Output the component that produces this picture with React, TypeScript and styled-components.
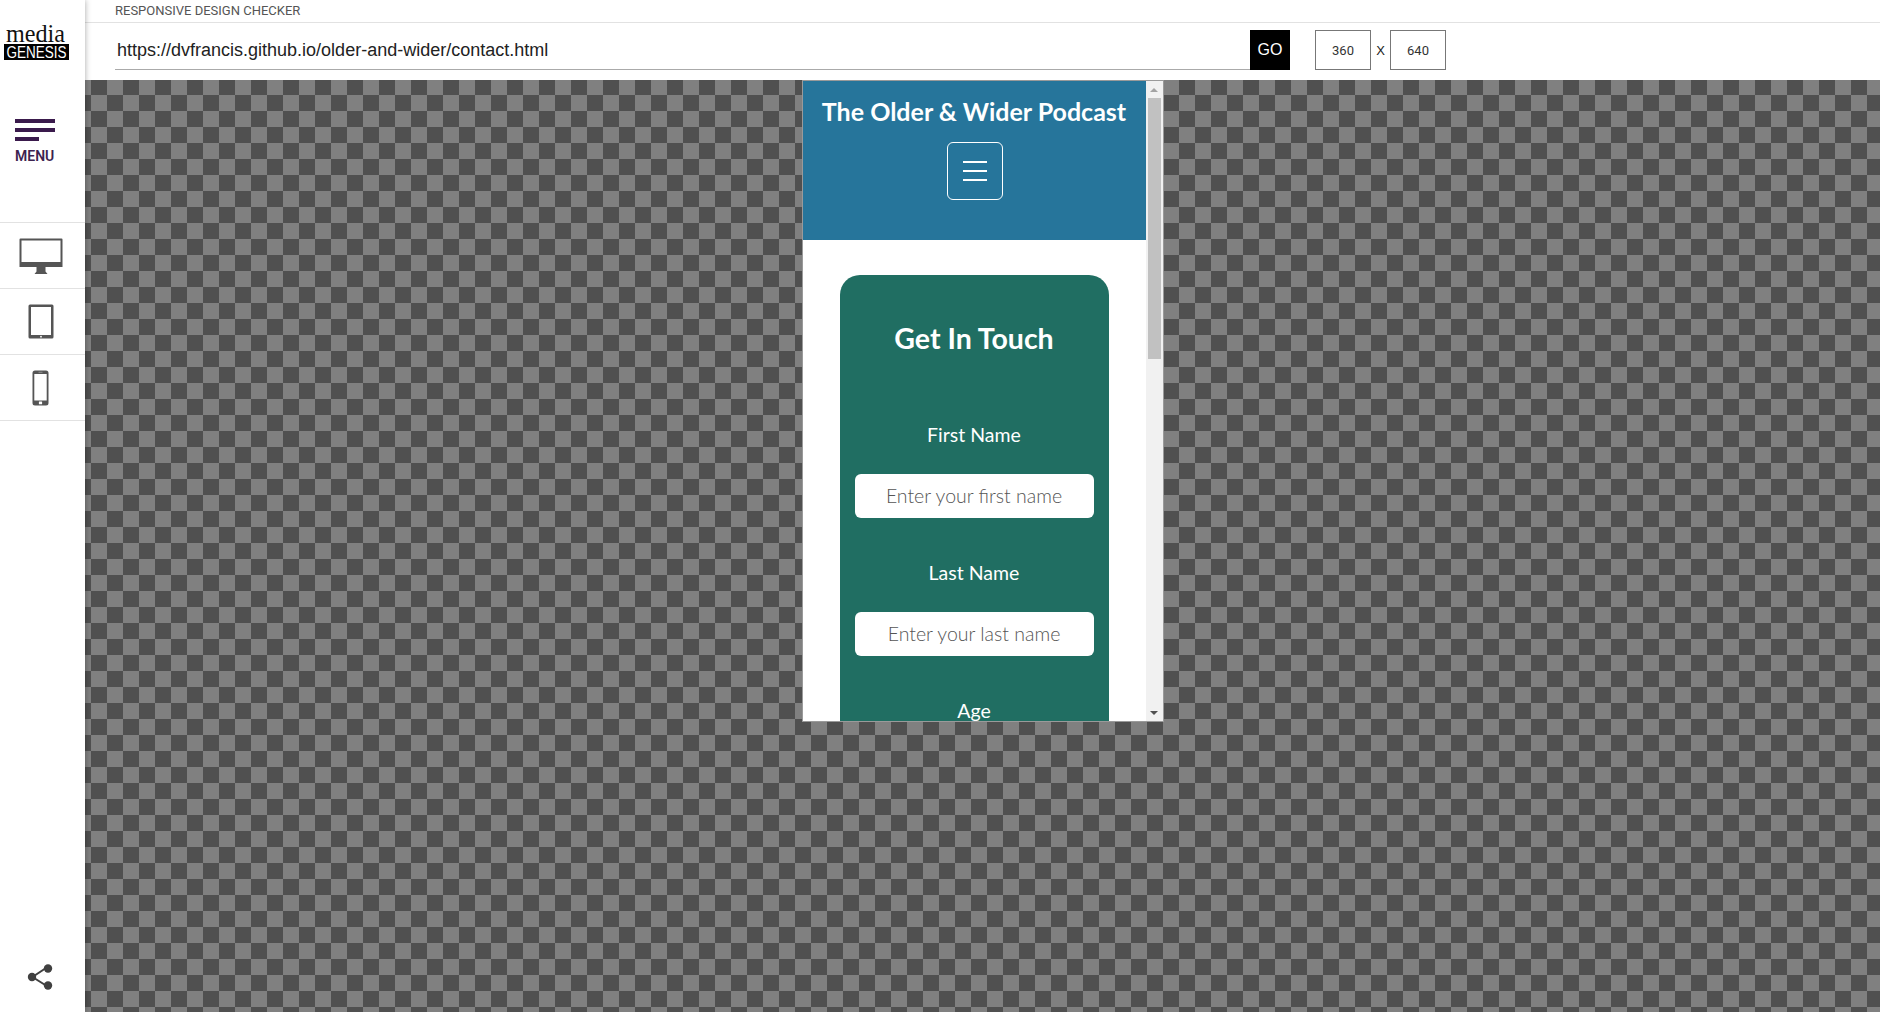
import React from "react";
import styled, { createGlobalStyle } from "styled-components";

const GlobalStyle = createGlobalStyle`
  html, body {
    margin: 0;
    height: 100%;
    overflow: hidden;
    background: #ffffff;
  }
  #root {
    height: 100%;
  }
  * {
    box-sizing: border-box;
  }
`;

function Logo() {
  return (
    <LogoSvg viewBox="0 0 85 48" width="85" height="48">
      <text x="35.5" y="25.7" textAnchor="middle" fontFamily="'Liberation Serif', serif" fontSize="26" textLength="59" lengthAdjust="spacingAndGlyphs" fill="#111">media</text>
      <rect x="4" y="28" width="65" height="16" fill="#000" />
      <text x="36.5" y="41.8" textAnchor="middle" fontFamily="'Liberation Sans', sans-serif" fontSize="16" textLength="60" lengthAdjust="spacingAndGlyphs" fill="#fff">GENESIS</text>
    </LogoSvg>
  );
}

function DesktopIcon() {
  return (
    <svg width="44" height="37" viewBox="0 0 44 37">
      <path fill="#555" fillRule="evenodd" d="M1.5 0.5h41a1 1 0 0 1 1 1v27.5h-43v-27.5a1 1 0 0 1 1-1zM2.500 2.500v21.500h39v-21.500z" />
      <path fill="#555" d="M17.500 29h9v4.500l2 2.500h-13l2-2.500z" />
    </svg>
  );
}

function TabletIcon() {
  return (
    <svg width="26" height="35" viewBox="0 0 26 35">
      <path fill="#555" fillRule="evenodd" d="M2 0.500h22a1.500 1.500 0 0 1 1.500 1.500v31a1.500 1.500 0 0 1-1.500 1.500h-22a1.500 1.500 0 0 1-1.500-1.500v-31a1.500 1.500 0 0 1 1.500-1.500zM3 3v28h20v-28z" />
      <circle cx="13" cy="32.700" r="0.900" fill="#fff" />
    </svg>
  );
}

function PhoneIcon() {
  return (
    <svg width="17" height="36" viewBox="0 0 17 36">
      <path fill="#555" fillRule="evenodd" d="M3 0.500h11a2.500 2.500 0 0 1 2.500 2.500v30a2.500 2.500 0 0 1-2.500 2.500h-11a2.500 2.500 0 0 1-2.500-2.500v-30a2.500 2.500 0 0 1 2.500-2.500zM2.300 4v26.500h12.400v-26.500z" />
      <rect x="6.500" y="1.800" width="4" height="0.900" fill="#999" />
      <rect x="6.900" y="31.600" width="3.200" height="2.600" rx="0.500" fill="#fff" />
    </svg>
  );
}

function ShareIcon() {
  return (
    <svg width="26" height="26" viewBox="0 0 26 26">
      <path d="M19 4 L5.500 13 L19 21.500" fill="none" stroke="#404040" strokeWidth="2" />
      <circle cx="5" cy="13" r="4.200" fill="#404040" />
      <circle cx="21" cy="4.500" r="4.200" fill="#404040" />
      <circle cx="21" cy="21.500" r="4.200" fill="#404040" />
    </svg>
  );
}

export default function App() {
  return (
    <>
      <GlobalStyle />
      <Page>
        <Sidebar>
          <LogoBox>
            <Logo />
          </LogoBox>
          <MenuButton>
            <MenuBar />
            <MenuBar />
            <MenuBar $short />
            <MenuLabel>MENU</MenuLabel>
          </MenuButton>
          <DeviceList>
            <DeviceRow $shift={3} $drop={1}><DesktopIcon /></DeviceRow>
            <DeviceRow $shift={3}><TabletIcon /></DeviceRow>
            <DeviceRow $shift={5}><PhoneIcon /></DeviceRow>
          </DeviceList>
          <ShareBox>
            <ShareIcon />
          </ShareBox>
        </Sidebar>

        <Main>
          <TitleRow>RESPONSIVE DESIGN CHECKER</TitleRow>
          <AddressRow>
            <UrlInput readOnly value="https://dvfrancis.github.io/older-and-wider/contact.html" />
            <GoButton>GO</GoButton>
            <SizeGroup>
              <SizeInput readOnly value="360" />
              <SizeSep>X</SizeSep>
              <SizeInput readOnly value="640" />
            </SizeGroup>
          </AddressRow>

          <Stage>
            <Frame>
              <Viewport>
                <SiteHeader>
                  <SiteTitle>The Older &amp; Wider Podcast</SiteTitle>
                  <Toggler>
                    <TogglerLine />
                    <TogglerLine />
                    <TogglerLine />
                  </Toggler>
                </SiteHeader>
                <SiteBody>
                  <Card>
                    <CardTitle>Get In Touch</CardTitle>
                    <Field>
                      <FieldLabel>First Name</FieldLabel>
                      <FieldInput placeholder="Enter your first name" />
                    </Field>
                    <Field>
                      <FieldLabel>Last Name</FieldLabel>
                      <FieldInput placeholder="Enter your last name" />
                    </Field>
                    <Field>
                      <FieldLabel>Age</FieldLabel>
                    </Field>
                  </Card>
                </SiteBody>
              </Viewport>
              <Scrollbar>
                <ArrowBox>
                  <ArrowUp />
                </ArrowBox>
                <Thumb />
                <ArrowBox>
                  <ArrowDown />
                </ArrowBox>
              </Scrollbar>
            </Frame>
          </Stage>
        </Main>
      </Page>
    </>
  );
}

const Page = styled.div`
  display: flex;
  width: 100%;
  height: 100vh;
`;

const Sidebar = styled.aside`
  flex: 0 0 85px;
  display: flex;
  flex-direction: column;
  background: #ffffff;
  box-shadow: 0 0 6px rgba(0, 0, 0, 0.35);
  position: relative;
  z-index: 2;
`;

const LogoBox = styled.div`
  height: 108px;
  padding-top: 16px;
`;

const LogoSvg = styled.svg`
  display: block;
`;

const MenuButton = styled.div`
  height: 114px;
  padding: 11px 0 0 15px;
  display: flex;
  flex-direction: column;
`;

const MenuBar = styled.div<{ $short?: boolean }>`
  width: ${(props) => (props.$short ? "24px" : "40px")};
  height: 4px;
  margin-bottom: 5px;
  background: #3a1a4c;
`;

const MenuLabel = styled.div`
  font-family: Roboto, sans-serif;
  font-size: 14px;
  font-weight: 600;
  line-height: 20px;
  color: #3d2350;
`;

const DeviceList = styled.div`
  display: flex;
  flex-direction: column;
  border-top: 1px solid #e2e2e2;
`;

const DeviceRow = styled.div<{ $shift: number; $drop?: number }>`
  height: 66px;
  display: flex;
  align-items: center;
  justify-content: center;
  padding-right: ${(props) => props.$shift}px;
  padding-top: ${(props) => (props.$drop || 0) * 2}px;
  border-bottom: 1px solid #e2e2e2;

  svg {
    display: block;
  }
`;

const ShareBox = styled.div`
  margin-top: auto;
  height: 70px;
  padding: 22px 0 0 27px;
`;

const Main = styled.main`
  flex: 1;
  min-width: 0;
  display: flex;
  flex-direction: column;
`;

const TitleRow = styled.div`
  height: 23px;
  padding-left: 30px;
  border-bottom: 1px solid #e2e2e2;
  font-family: Roboto, sans-serif;
  font-size: 13px;
  line-height: 21px;
  color: #555555;
`;

const AddressRow = styled.div`
  height: 57px;
  padding: 7px 0 10px 30px;
  display: flex;
  align-items: stretch;
`;

const UrlInput = styled.input`
  width: 1135px;
  padding: 2px 0 0 2px;
  border: none;
  border-bottom: 1px solid #aaaaaa;
  outline: none;
  font-family: "Liberation Sans", Arial, sans-serif;
  font-size: 18px;
  color: #222222;
`;

const GoButton = styled.button`
  width: 40px;
  padding: 0;
  border: none;
  background: #000000;
  color: #ffffff;
  font-family: "Liberation Sans", Arial, sans-serif;
  font-size: 16px;
`;

const SizeGroup = styled.div`
  margin-left: 25px;
  display: flex;
  align-items: stretch;
`;

const SizeInput = styled.input`
  width: 56px;
  padding: 0;
  border: 1px solid #777777;
  outline: none;
  text-align: center;
  font-family: Roboto, sans-serif;
  font-size: 13px;
  color: #333333;
`;

const SizeSep = styled.span`
  width: 19px;
  display: flex;
  align-items: center;
  justify-content: center;
  font-family: "Liberation Sans", Arial, sans-serif;
  font-size: 13px;
  color: #222222;
`;

const Stage = styled.div`
  flex: 1;
  display: flex;
  justify-content: center;
  align-items: flex-start;
  background-color: #808080;
  background-image: conic-gradient(#505050 25%, #808080 0 50%, #505050 0 75%, #808080 0);
  background-size: 32px 32px;
  background-position: -10px -1px;
`;

const Frame = styled.div`
  width: 362px;
  height: 642px;
  display: flex;
  border: 1px solid #9a9a9a;
  background: #ffffff;
`;

const Viewport = styled.div`
  width: 343px;
  height: 640px;
  overflow: hidden;
`;

const SiteHeader = styled.header`
  height: 159px;
  padding-top: 12px;
  display: flex;
  flex-direction: column;
  align-items: center;
  background: #26759b;
`;

const SiteTitle = styled.h1`
  margin: 0;
  font-family: Lato, sans-serif;
  font-size: 25px;
  font-weight: 700;
  line-height: 36px;
  color: #ffffff;
  white-space: nowrap;
`;

const Toggler = styled.div`
  margin: 13px 0 0 1px;
  width: 56px;
  height: 58px;
  display: flex;
  flex-direction: column;
  align-items: center;
  justify-content: center;
  gap: 7px;
  border: 1px solid #ffffff;
  border-radius: 6px;
`;

const TogglerLine = styled.span`
  width: 24px;
  height: 2px;
  background: #ffffff;
`;

const SiteBody = styled.div`
  padding: 35px 37px 0;
`;

const Card = styled.section`
  padding: 45px 15px 0;
  display: flex;
  flex-direction: column;
  border-radius: 20px;
  background: #206e62;
`;

const CardTitle = styled.h2`
  margin: 0 0 67px;
  font-family: Lato, sans-serif;
  font-size: 28.5px;
  font-weight: 700;
  line-height: 36px;
  text-align: center;
  color: #ffffff;
`;

const Field = styled.div`
  margin-bottom: 43px;
  display: flex;
  flex-direction: column;
  gap: 27px;
`;

const FieldLabel = styled.label`
  padding-bottom: 1px;
  font-family: Lato, sans-serif;
  font-size: 19.5px;
  line-height: 23px;
  text-align: center;
  color: #ffffff;
`;

const FieldInput = styled.input`
  width: 100%;
  height: 44px;
  padding: 0 8px 2px;
  border: none;
  border-radius: 6px;
  outline: none;
  background: #ffffff;
  text-align: center;
  font-family: Lato, sans-serif;
  font-size: 19.5px;
  font-weight: 300;

  &::placeholder {
    color: #555555;
    opacity: 1;
  }
`;

const Scrollbar = styled.div`
  width: 17px;
  display: flex;
  flex-direction: column;
  background: #f1f1f1;
`;

const ArrowBox = styled.div`
  flex: 0 0 17px;
  display: flex;
  align-items: center;
  justify-content: center;
`;

const ArrowUp = styled.div`
  width: 0;
  height: 0;
  border-left: 4px solid transparent;
  border-right: 4px solid transparent;
  border-bottom: 4px solid #a3a3a3;
`;

const ArrowDown = styled.div`
  width: 0;
  height: 0;
  border-left: 4px solid transparent;
  border-right: 4px solid transparent;
  border-top: 4px solid #505050;
`;

const Thumb = styled.div`
  height: 261px;
  margin: 0 2px 345px;
  background: #c1c1c1;
`;
